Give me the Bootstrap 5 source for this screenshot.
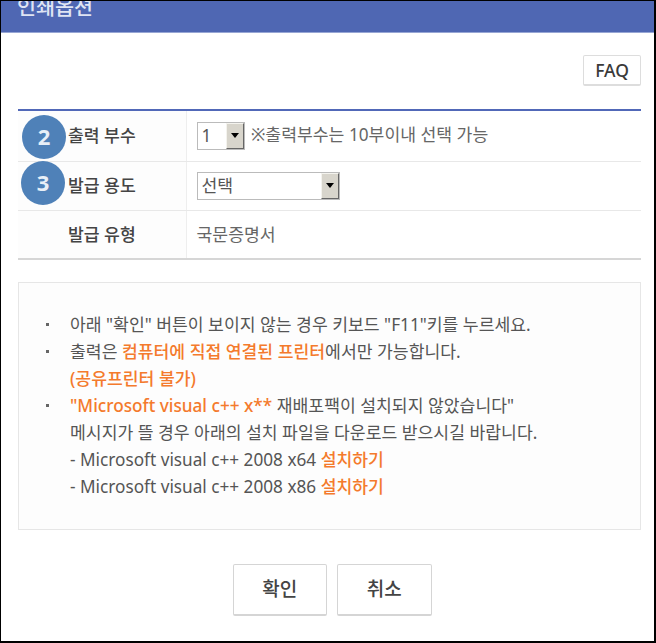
<!DOCTYPE html>
<html lang="ko">
<head>
<meta charset="utf-8">
<title>인쇄옵션</title>
<link href="https://cdn.jsdelivr.net/npm/bootstrap@5.3.0/dist/css/bootstrap.min.css" rel="stylesheet">
<style>
html,body{height:643px;overflow:hidden;background:#fff}
body{font-family:"Noto Sans","Noto Sans CJK KR",sans-serif;color:#555;font-size:17.2px}
.frame{height:643px;border:solid #000;border-width:1px 2px 2px 1px;background:#fff;position:relative;overflow:hidden}
.head{height:32px;background:#4f67b3;border-bottom:1px solid #97a6d4;color:#dfe4f3;font-size:20.7px;font-weight:500;line-height:26px;padding:0 0 0 16px;margin-bottom:22px;display:flex;align-items:flex-end;overflow:hidden}
.head span{display:block;height:15px;margin-bottom:12px;line-height:4px}
.faq{width:58px;height:31px;padding:0;font-size:17.5px;font-weight:500;color:#3a3a3a;border:1px solid #ddd;border-bottom-width:2px;border-radius:2px;background:#fff;line-height:27px}
.sheet{margin:0 13px 0 17px}
.opts{border-top:2px solid #5168b8;border-bottom:2px solid #d6d6d6;margin:23px 0 22px;width:623px;table-layout:fixed}
.opts th,.opts td{height:49px;padding:0;border-bottom:1px solid #e8e8e8;vertical-align:middle;font-size:17.2px}
.opts tr:first-child th,.opts tr:first-child td{height:51px}
.opts tr:last-child th,.opts tr:last-child td{border-bottom:0;padding-top:2px}
.opts th{width:168px;background:#fdfdfd;color:#444;font-weight:500;padding-left:50px;border-right:1px solid #eee}
.opts td{padding-left:10px;color:#666}
.pick{display:inline-flex;height:28px;border:1px solid #bbb;vertical-align:middle;align-items:stretch;background:#fff;color:#555;line-height:26px;padding-left:4px;justify-content:space-between}
.pick1{width:48px}.pick2{width:143px}
.arrow{width:18px;background:#d8d5cc;border:1px solid;border-color:#f4f3ee #666 #666 #f4f3ee;display:flex;align-items:center;justify-content:center}
.arrow i{display:block;border:4px solid transparent;border-top:5px solid #000;border-bottom:0}
.note{margin-left:2px}
.dot{position:absolute;left:21px;width:44px;height:44px;border-radius:50%;background:#4f81b8;color:#e8eff7;font-size:22px;font-weight:700;text-align:center;line-height:42px;font-family:"Open Sans",sans-serif}
.d2{top:114px}.d3{top:160px;left:20px}
.info{border:1px solid #e6e6e6;background:#fdfdfd;height:248px;padding:28px 0 0 51px;line-height:27px;color:#555;margin-bottom:34px}
.info ul{list-style:none;margin:0;padding:0}
.info li{position:relative}
.info li::before{content:"";position:absolute;left:-24px;top:12px;width:3px;height:3px;background:#666}
.hot{color:#f47a2c;font-weight:500}
.acts{padding-left:5px;gap:10px}
.act{width:94.5px;height:52px;padding:0;border:1px solid #d5d5d5;border-bottom-width:2px;border-radius:2px;background:#fff;color:#444;font-size:19px;font-weight:500}
</style>
</head>
<body>
<div class="frame">
  <div class="head"><span>인쇄옵션</span></div>
  <div class="sheet">
    <div class="d-flex justify-content-end"><button class="btn faq" type="button">FAQ</button></div>
    <table class="opts">
      <tr><th>출력 부수</th><td><span class="pick pick1">1<span class="arrow"><i></i></span></span> <span class="note">※출력부수는 10부이내 선택 가능</span></td></tr>
      <tr><th>발급 용도</th><td><span class="pick pick2">선택<span class="arrow"><i></i></span></span></td></tr>
      <tr><th>발급 유형</th><td>국문증명서</td></tr>
    </table>
    <div class="info">
      <ul>
        <li>아래 "확인" 버튼이 보이지 않는 경우 키보드 "F11"키를 누르세요.</li>
        <li>출력은 <span class="hot">컴퓨터에 직접 연결된 프린터</span>에서만 가능합니다.<br><span class="hot">(공유프린터 불가)</span></li>
        <li><span class="hot">"Microsoft visual c++ x**</span> 재배포팩이 설치되지 않았습니다"<br>메시지가 뜰 경우 아래의 설치 파일을 다운로드 받으시길 바랍니다.<br>- Microsoft visual c++ 2008 x64 <span class="hot">설치하기</span><br>- Microsoft visual c++ 2008 x86 <span class="hot">설치하기</span></li>
      </ul>
    </div>
    <div class="d-flex justify-content-center acts">
      <button class="btn act" type="button">확인</button>
      <button class="btn act" type="button">취소</button>
    </div>
  </div>
  <span class="dot d2">2</span>
  <span class="dot d3">3</span>
</div>
<script src="https://cdn.jsdelivr.net/npm/bootstrap@5.3.0/dist/js/bootstrap.bundle.min.js"></script>
</body>
</html>
